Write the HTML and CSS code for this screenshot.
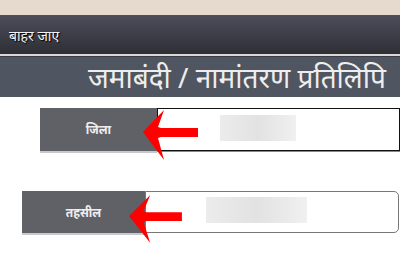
FILE: index.html
```html
<!DOCTYPE html>
<html>
<head>
<meta charset="utf-8">
<link rel="stylesheet" href="styles.css">
</head>
<body>
<div class="topband"></div>
<div class="header"><span class="back">बाहर जाए</span></div>
<div class="titlebar"><h1 class="title">जमाबंदी / नामांतरण प्रतिलिपि</h1></div>
<div class="row row-district">
  <div class="label">जिला</div>
  <div class="field field-district"><div class="blur"></div></div>
  <svg class="arrow" viewBox="0 0 56 50" width="56" height="50"><polygon points="0,22 21,0 15,17 18,18 55,18 55,27 18,27 15,28 21,50" fill="#ff0000"/></svg>
</div>
<div class="row row-tehsil">
  <div class="label">तहसील</div>
  <div class="field field-tehsil"><div class="blur"></div></div>
  <svg class="arrow" viewBox="0 0 56 50" width="56" height="48"><polygon points="0,22 22,0 15,17 18,18 55,18 55,27 18,27 15,28 22,50" fill="#ff0000"/></svg>
</div>
</body>
</html>
```
FILE: styles.css
```css
html, body {
  margin: 0;
  padding: 0;
  background: #ffffff;
  width: 400px;
  height: 258px;
  overflow: hidden;
  font-family: "Noto Sans", "Noto Sans Devanagari", "Lohit Devanagari", sans-serif;
}
.topband {
  height: 15px;
  background: #e6d9ce;
}
.header {
  height: 39px;
  background: linear-gradient(#4c4e5b, #2e2e34);
  display: flex;
  align-items: center;
  padding-left: 9px;
  border-bottom: 2px solid #d8d8d8;
}
.back {
  color: #f2f2f2;
  font-size: 14px;
  text-shadow: 1px 1px 1px #000;
  margin-top: 2px;
}
.titlebar {
  height: 40px;
  background: #505661;
  border-top: 1px solid #3a3d45;
  display: flex;
  align-items: center;
  justify-content: flex-end;
  padding-right: 14px;
}
.title {
  margin: 0;
  color: #eeeeee;
  font-weight: normal;
  font-size: 28px;
  line-height: 40px;
}
.row {
  position: relative;
  display: flex;
  height: 43px;
}
.row-district {
  margin-top: 11px;
  padding-left: 40px;
}
.row-tehsil {
  margin-top: 40px;
  padding-left: 22px;
  height: 42px;
}
.label {
  background: #606167;
  color: #eeeeee;
  font-size: 12px;
  font-weight: bold;
  display: flex;
  align-items: center;
  justify-content: center;
  box-shadow: 0 2px 0 #c8c8c8;
}
.row-district .label { width: 120px; }
.row-tehsil .label { width: 123px; }
.field {
  box-sizing: border-box;
  background: #ffffff;
  position: relative;
}
.field-district {
  width: 250px;
  border: 1px solid #111;
  height: 43px;
  box-shadow: 0 1px 0 #888;
}
.field-tehsil {
  width: 254px;
  border: 1px solid #777;
  border-radius: 0 5px 5px 0;
  height: 42px;
}
.blur {
  position: absolute;
  background: linear-gradient(90deg, #ececec, #e2e2e2 50%, #f0f0f0);
}
.field-district .blur {
  left: 62px;
  top: 6px;
  width: 76px;
  height: 26px;
}
.field-tehsil .blur {
  left: 60px;
  top: 5px;
  width: 101px;
  height: 26px;
}
.arrow {
  position: absolute;
}
.row-district .arrow {
  left: 143px;
  top: 2px;
}
.row-tehsil .arrow {
  left: 128px;
  top: 4px;
}
```
